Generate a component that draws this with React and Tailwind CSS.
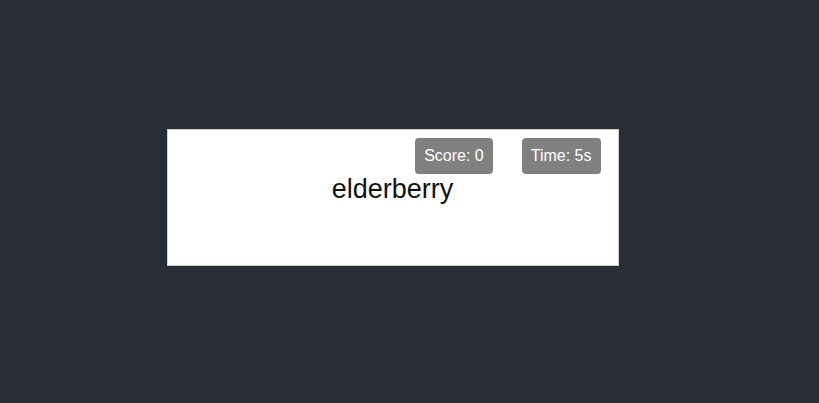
import React from 'react';

function Badge({ children }) {
  return (
    <div className="h-[36px] px-[9px] flex items-center rounded-[4px] bg-[#808080] text-white text-[16px] leading-none">
      {children}
    </div>
  );
}

export default function App() {
  return (
    <div
      className="w-full h-[403px] bg-[#282c34] flex items-center justify-center pr-[34px] pb-[8px]"
      style={{ fontFamily: '"Liberation Sans", Arial, sans-serif' }}
    >
      <div className="w-[452px] h-[137px] bg-white border border-[#d0d0d0] flex flex-col">
        {/* Stats */}
        <div className="flex justify-end gap-[29px] pt-[8px] pr-[17px]">
          <Badge>Score: 0</Badge>
          <Badge>Time: 5s</Badge>
        </div>

        <p className="text-center text-[27px] leading-[31px] text-[#111]">elderberry</p>
      </div>
    </div>
  );
}
